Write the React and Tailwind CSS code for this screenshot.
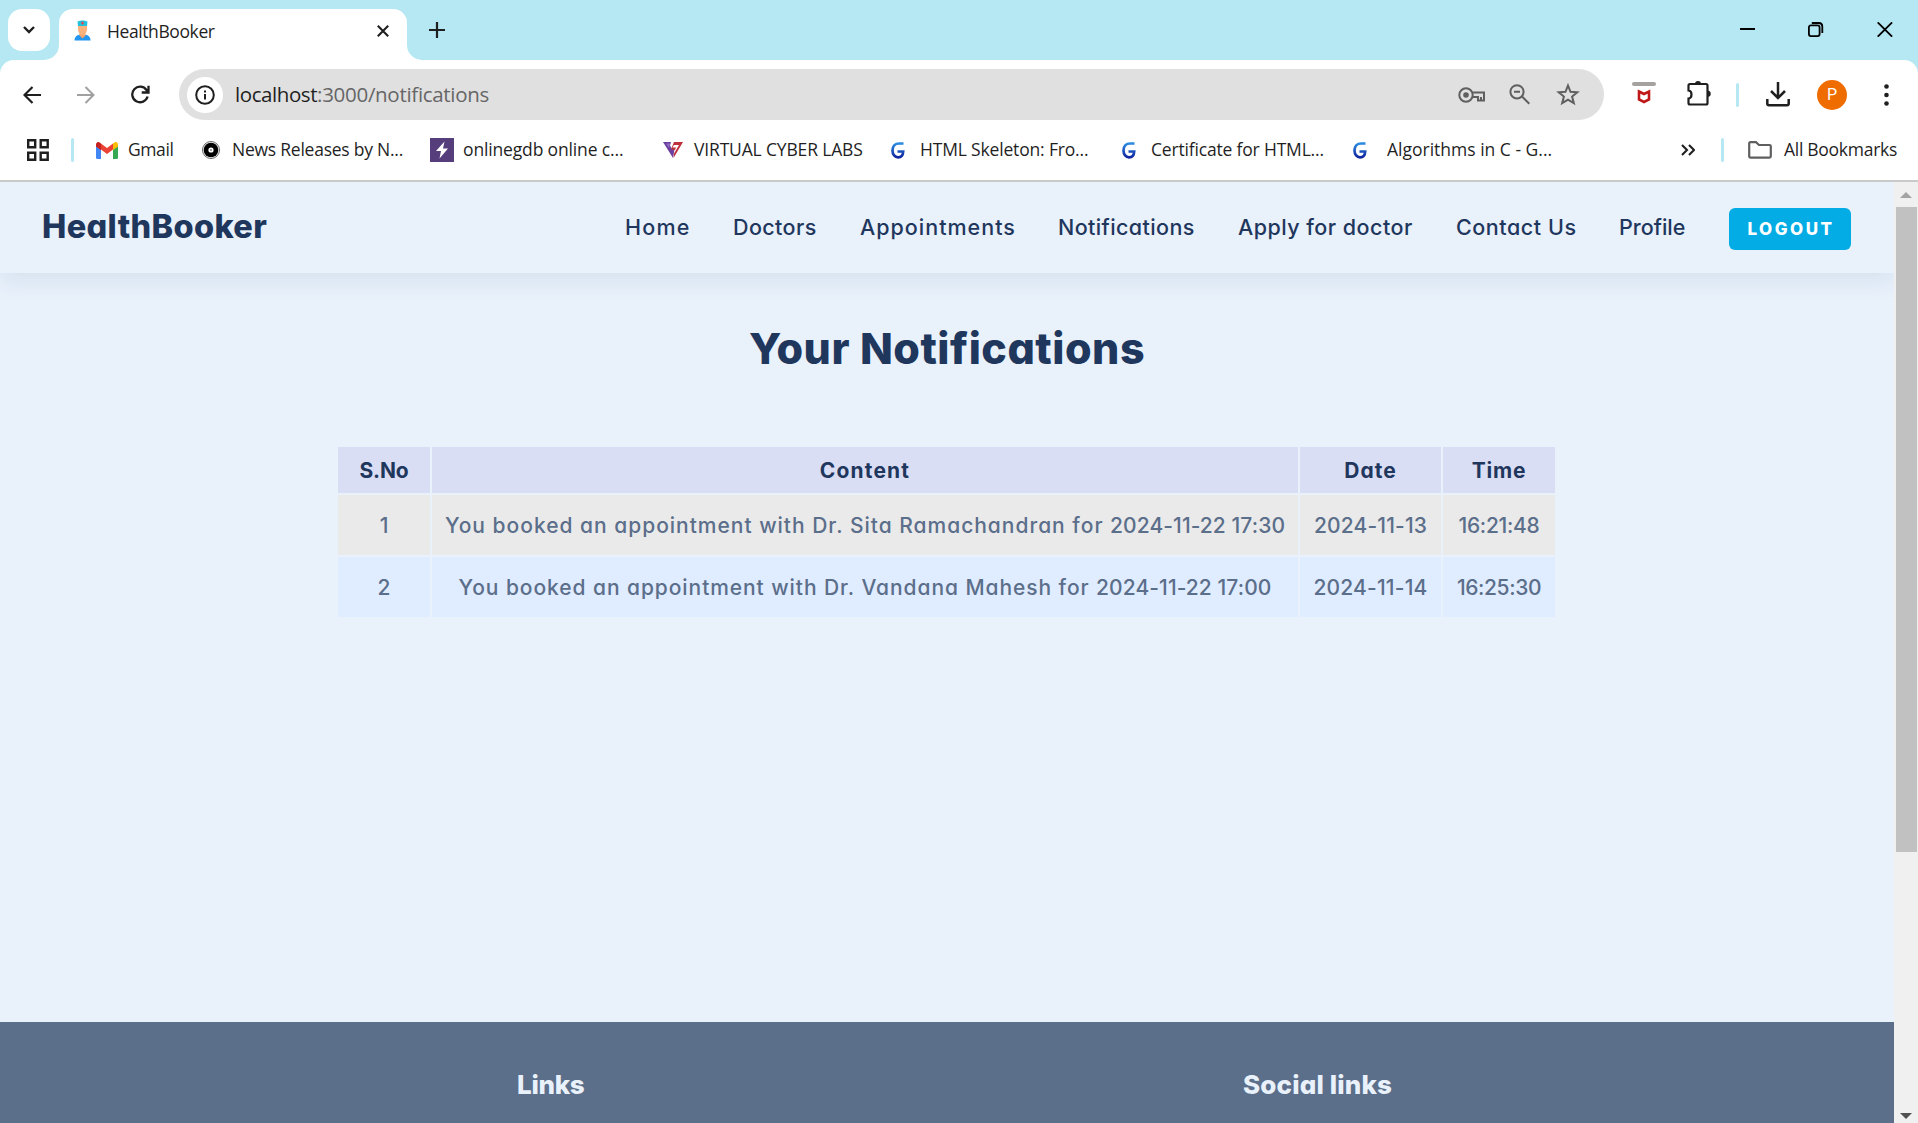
import React from "react";

function Doctor() {
  return (
    <svg width="17" height="21" viewBox="0 0 17 21">
      <path d="M0.5 20.5c0-4 2.500-5.500 6-6h4c3.500.5 6 2 6 6z" fill="#2196f3" />
      <path d="M5.500 13h6v2.500l-3 3-3-3z" fill="#f5a56b" />
      <path d="M4 5h9v4c0 3.500-2 6-4.500 6S4 12.500 4 9z" fill="#f9b27c" />
      <path d="M3.500 1.500C6 0 11 0 13.500 1.500L13 6H4z" fill="#22c1dc" />
      <path d="M8.500 1.500v3M7 3h3" stroke="#e5404a" strokeWidth="1.200" />
    </svg>
  );
}

function GmailIcon() {
  return (
    <svg width="22" height="17" viewBox="0 0 22 17">
      <path d="M0 3v12.500A1.500 1.500 0 0 0 1.500 17H5V6z" fill="#4285f4" />
      <path d="M22 3v12.500a1.500 1.500 0 0 1-1.500 1.500H17V6z" fill="#34a853" />
      <path d="M5 1.500v6l6 4.600 6-4.600v-6l-6 4.500z" fill="#ea4335" />
      <path d="M0 2.500v2L5 8.300V1.500L3.600.5C2-.5 0 .5 0 2.500z" fill="#c5221f" />
      <path d="M22 2.500v2l-5 3.800V1.500l1.400-1c1.600-1 3.600 0 3.600 2z" fill="#fbbc04" />
    </svg>
  );
}

function DotIcon() {
  return (
    <svg width="18" height="18" viewBox="0 0 18 18">
      <circle cx="9" cy="9" r="8.500" fill="#fff" stroke="#555" strokeWidth="0.900" />
      <circle cx="9" cy="9" r="7.300" fill="#000" />
      <circle cx="9" cy="9" r="2.600" fill="#fff" />
      <circle cx="9" cy="9" r="0.900" fill="#777" />
    </svg>
  );
}

function BoltIcon() {
  return (
    <svg width="24" height="24" viewBox="0 0 24 24">
      <path d="M0 0h24v24H0z" fill="#563d7c" />
      <path d="M14.500 3.500 6 13h5L9.500 20.500 18 10.500h-5z" fill="#fff" />
    </svg>
  );
}

function VclIcon() {
  return (
    <svg width="20" height="16" viewBox="0 0 20 16">
      <path d="M0 0h8L7 3.500 9 7h2.500L10 16z" fill="#6a3fa0" />
      <path d="M11 0h9L10.500 16 11 11.500 16 3h-5L9.500 5.500H13l-1 2.500-4-.5z" fill="#c0303a" />
      <path d="M3 1.500h4L6 6z" fill="#8d6cc0" />
    </svg>
  );
}

function GIcon() {
  return (
    <svg width="14" height="17" viewBox="0 0 14 17">
      <defs>
        <linearGradient id="g" x1="0" y1="0" x2="0" y2="1">
          <stop offset="0" stopColor="#2a8be0" />
          <stop offset="1" stopColor="#1226a0" />
        </linearGradient>
      </defs>
      <path d="M12.500 1.500H8C4 1.500 1.500 4.500 1.500 8.500S4 15.300 7 15.300s5-2 5.200-5.800H6.500" fill="none" stroke="url(#g)" strokeWidth="2.700" />
    </svg>
  );
}

const bookmarks = [
  { box: "w-[106px]", slot: "w-8", icon: <GmailIcon />, text: "Gmail", track: "tracking-[-0.4px]" },
  { box: "w-[228px]", slot: "w-[30px]", icon: <DotIcon />, text: "News Releases by N...", track: "tracking-[-0.24px]" },
  { box: "w-[233px]", slot: "w-[33px]", icon: <BoltIcon />, text: "onlinegdb online c...", track: "tracking-[-0.15px]" },
  { box: "w-[228px]", slot: "w-[31px]", icon: <VclIcon />, text: "VIRTUAL CYBER LABS", track: "tracking-[-0.16px]" },
  { box: "w-[231px]", slot: "w-[29px]", icon: <GIcon />, text: "HTML Skeleton: Fro...", track: "tracking-[-0.17px]" },
  { box: "w-[231px]", slot: "w-[29px]", icon: <GIcon />, text: "Certificate for HTML...", track: "tracking-[-0.18px]" },
  { box: "w-[328px]", slot: "w-[34px]", icon: <GIcon />, text: "Algorithms in C - G...", track: "tracking-normal" },
];

const nav = [
  { text: "Home", box: "w-[108px]", track: "tracking-[1.2px]" },
  { text: "Doctors", box: "w-[127px]", track: "tracking-[0.4px]" },
  { text: "Appointments", box: "w-[198px]", track: "tracking-[1px]" },
  { text: "Notifications", box: "w-[180px]", track: "tracking-[0.4px]" },
  { text: "Apply for doctor", box: "w-[218px]", track: "tracking-[0.47px]" },
  { text: "Contact Us", box: "w-[163px]", track: "tracking-[0.55px]" },
  { text: "Profile", box: "w-[110px]", track: "tracking-normal" },
];

const S = { fill: "none", stroke: "#1f1f1f", strokeWidth: 2 };

function Tabs() {
  return (
    <div className="flex h-[60px] bg-[#b5e8f3]">
      <div className="ml-2 mt-[9px] flex h-[42px] w-[42px] items-center justify-center rounded-[14px] bg-white">
        <svg width="14" height="10" viewBox="0 0 14 10"><path d="m2 2 5 5 5-5" {...S} strokeWidth="2.400" /></svg>
      </div>
      <div className="relative ml-[9px] mt-[9px] flex h-[51px] w-[348px] items-center rounded-t-[14px] bg-white pb-[8px] pl-[15px]">
        <svg className="absolute -left-[15px] bottom-0" width="15" height="15"><path d="M0 15A15 15 0 0 0 15 0V15z" fill="#fff" /></svg>
        <svg className="absolute -right-[15px] bottom-0" width="15" height="15"><path d="M15 15A15 15 0 0 1 0 0V15z" fill="#fff" /></svg>
        <Doctor />
        <span className="ml-4 mt-[2px] w-[270px] whitespace-nowrap text-[17.500px] tracking-[-0.4px] text-[#1f1f1f]">HealthBooker</span>
        <svg width="12" height="12" viewBox="0 0 12 12"><path d="m.8.8 10.400 10.400M11.200.8.8 11.200" {...S} strokeWidth="2.100" /></svg>
      </div>
      <svg className="ml-[22px] mt-[22px]" width="16" height="16" viewBox="0 0 16 16"><path d="M8 0v16M0 8h16" {...S} strokeWidth="2.200" /></svg>
      <div className="ml-auto mr-[25px] mt-[22px] flex gap-[53px]">
        <svg width="15" height="15" viewBox="0 0 15 15"><path d="M0 7h15" stroke="#000" strokeWidth="2" /></svg>
        <svg width="16" height="15" viewBox="0 0 16 15" fill="none" stroke="#000" strokeWidth="1.800">
          <rect x=".9" y="3.400" width="10.700" height="10.700" rx="2" />
          <path d="M3.800 1H11a3.500 3.500 0 0 1 3.300 3.500V11" />
        </svg>
        <svg width="16" height="15" viewBox="0 0 16 15"><path d="m.7.400 14.400 14.300M15.100.4.700 14.700" stroke="#000" strokeWidth="1.800" /></svg>
      </div>
    </div>
  );
}

function Toolbar() {
  return (
    <div className="bg-[#b5e8f3]">
      <div className="flex h-[69px] items-center rounded-t-[14px] bg-white pl-[23px]">
        <svg width="18" height="18" viewBox="0 0 18 18"><path d="M18 9H2M9.500 1 1.500 9l8 8" {...S} strokeWidth="2.200" /></svg>
        <svg className="ml-9" width="18" height="18" viewBox="0 0 18 18"><path d="M0 9h16M8.500 1l8 8-8 8" {...S} stroke="#a0a0a0" strokeWidth="2" /></svg>
        <svg className="ml-9" width="19" height="19" viewBox="0 0 19 19"><path d="M16.600 11.500A7.800 7.800 0 1 1 15.500 5L17 7.200M17.500.7v6.800h-6.800" {...S} strokeWidth="2.300" /></svg>
        <div className="ml-[29px] flex h-[51px] w-[1425px] items-center rounded-full bg-[#e0e0e0] pl-2">
          <div className="flex h-9 w-9 items-center justify-center rounded-full bg-white">
            <svg width="20" height="20" viewBox="0 0 20 20"><circle cx="10" cy="10" r="8.800" {...S} /><path d="M10 9v5.500M10 5.400v2" {...S} /></svg>
          </div>
          <div className="ml-3 flex w-[1223px] whitespace-nowrap text-[20.500px]">
            <span className="tracking-[-0.42px] text-[#1f1f1f]">localhost</span>
            <span className="tracking-[-0.3px] text-[#666]">:3000/notifications</span>
          </div>
          <svg width="28" height="18" viewBox="0 0 28 18" fill="none" stroke="#5f5f5f" strokeWidth="2"><circle cx="8" cy="9" r="6.700" /><circle cx="8" cy="9" r="2.800" fill="#5f5f5f" stroke="none" /><path d="M14.500 6.500H26V14.500h-6V11h-5.500M23 14.500V11" /></svg>
          <svg className="ml-[23px]" width="21" height="21" viewBox="0 0 21 21" fill="none" stroke="#5f5f5f" strokeWidth="2"><circle cx="8" cy="7.800" r="6.600" /><path d="M13 12.500l7.300 7.300M5 7.800h6" /></svg>
          <svg className="ml-[26px]" width="24" height="23" viewBox="0 0 24 23"><path d="m12 2.500 2.500 6.300 6.800.5-5.200 4.300 1.700 6.600-5.800-3.600-5.800 3.600 1.700-6.600-5.200-4.300 6.800-.5z" fill="none" stroke="#5f5f5f" strokeWidth="2" /></svg>
        </div>
        <svg className="-mt-1 ml-7" width="24" height="22" viewBox="0 0 24 22"><path d="M2 2h20" stroke="#a5a1a1" strokeWidth="4" strokeLinecap="round" /><path d="M7 9.500 12 12l5-2.500v8l-5 2.500-5-2.500z" fill="none" stroke="#c01818" strokeWidth="2.600" /></svg>
        <svg className="-mt-1 ml-[31px]" width="25" height="26" viewBox="0 0 25 26"><path d="M1.500 5.500c0-1 .5-1.500 1.500-1.500h16c1 0 1.500.5 1.500 1.500V23c0 1-.5 1.500-1.500 1.500H3c-1 0-1.500-.5-1.500-1.500v-4.500c4-.5 4-7.500 0-8z" {...S} strokeWidth="2.200" /><path d="M8 4a3 3 0 0 1 6 0zM21 10.500a3.300 3.300 0 0 1 0 6.500z" fill="#1f1f1f" /></svg>
        <div className="ml-6 h-6 w-[3px] rounded bg-[#b5e8f3]" />
        <svg className="ml-[27px]" width="24" height="25" viewBox="0 0 24 25"><path d="M12 0v15M5 9l7 7 7-7M1.300 17v4.500c0 1 .5 1.700 1.700 1.700h18c1.200 0 1.700-.7 1.700-1.700V17" {...S} strokeWidth="2.500" /></svg>
        <div className="ml-[27px] flex h-[30px] w-[30px] items-center justify-center rounded-full bg-[#ef6c00] font-[Roboto,sans-serif] text-[16px] text-white">P</div>
        <svg className="ml-[37px]" width="5" height="22" viewBox="0 0 5 22" fill="#1f1f1f"><circle cx="2.500" cy="2.500" r="2.300" /><circle cx="2.500" cy="11" r="2.300" /><circle cx="2.500" cy="19.500" r="2.300" /></svg>
      </div>
    </div>
  );
}

function Bookmarks() {
  return (
    <div className="flex h-[53px] items-center border-b-2 border-[#c9cbcb] bg-white pb-[9px] pl-[27px] text-[17.500px] text-[#1f1f1f]">
      <svg width="22" height="22" viewBox="0 0 22 22" {...S} strokeWidth="2.400"><path d="M1.200 1.200h7v7h-7zM13.700 1.200h7v7h-7zM1.200 13.700h7v7h-7zM13.700 13.700h7v7h-7z" /></svg>
      <div className="ml-[22px] mr-[22px] h-6 w-[3px] rounded bg-[#b5e8f3]" />
      {bookmarks.map((b) => (
        <div key={b.text} className={"flex shrink-0 items-center " + b.box}>
          <div className={"shrink-0 " + b.slot}>{b.icon}</div>
          <span className={"-mt-px whitespace-nowrap " + b.track}>{b.text}</span>
        </div>
      ))}
      <svg width="14" height="12" viewBox="0 0 14 12"><path d="m1 1 5 5-5 5M8 1l5 5-5 5" {...S} strokeWidth="2.100" /></svg>
      <div className="ml-[26px] h-6 w-[3px] rounded bg-[#b5e8f3]" />
      <svg className="ml-6" width="24" height="18" viewBox="0 0 24 18"><path d="M1.200 2.500c0-.9.400-1.300 1.300-1.300H8l3 2.800h10.500c.9 0 1.300.4 1.300 1.300v10c0 .9-.4 1.300-1.300 1.300h-19c-.9 0-1.300-.4-1.300-1.300z" fill="none" stroke="#5f5f5f" strokeWidth="2.200" /></svg>
      <span className="-mt-px ml-3 whitespace-nowrap tracking-[-0.28px]">All Bookmarks</span>
    </div>
  );
}

const headers = [
  { text: "S.No", track: "tracking-[-0.1px]" },
  { text: "Content", track: "tracking-[1.15px]" },
  { text: "Date", track: "tracking-[1px]" },
  { text: "Time", track: "tracking-[0.8px]" },
];

const rows = [
  {
    color: "bg-[#eaeaea]",
    cells: [
      { text: "1", track: "" },
      { text: "You booked an appointment with Dr. Sita Ramachandran for ", track: "tracking-[0.99px]", when: "2024-11-22 17:30" },
      { text: "2024-11-13", track: "tracking-[0.15px]" },
      { text: "16:21:48", track: "tracking-[-0.3px]" },
    ],
  },
  {
    color: "bg-[#e0ecff]",
    cells: [
      { text: "2", track: "" },
      { text: "You booked an appointment with Dr. Vandana Mahesh for ", track: "tracking-[0.93px]", when: "2024-11-22 17:00" },
      { text: "2024-11-14", track: "tracking-[0.18px]" },
      { text: "16:25:30", track: "tracking-[-0.4px]" },
    ],
  },
];

function Page() {
  return (
    <div className="flex h-[941px] font-[Inter,sans-serif] [font-feature-settings:'cv11']">
      <div className="flex w-[1894px] flex-col overflow-hidden bg-[#e9f1fb] text-[#1f375d]">
        <header className="flex h-[91px] shrink-0 items-center pl-[42px] shadow-[0_10px_20px_rgba(30,80,120,0.08)]">
          <span className="w-[583px] whitespace-nowrap text-[32.500px] font-extrabold tracking-[0.35px]">HealthBooker</span>
          {nav.map((n) => (
            <div key={n.text} className={"shrink-0 whitespace-nowrap text-[21.500px] font-medium " + n.box + " " + n.track}>{n.text}</div>
          ))}
          <button className="mt-[3px] flex h-[42px] w-[122px] shrink-0 items-center justify-center rounded-md bg-[#03ace4] pl-[2px] pt-px text-[17px] font-extrabold tracking-[2.5px] text-white">LOGOUT</button>
        </header>
        <h1 className="mt-[48px] text-center text-[43px] font-extrabold leading-[54px] tracking-[0.5px]">Your Notifications</h1>
        <div className="ml-[338px] mt-[72px] grid w-[1217px] grid-cols-[92px_866px_141px_112px] gap-x-0.5 gap-y-0.5 text-[21px]">
          {headers.map((h) => (
            <div key={h.text} className={"flex h-[46px] items-center justify-center bg-[#dadef4] pt-0.5 font-bold " + h.track}>{h.text}</div>
          ))}
          {rows.map((r) =>
            r.cells.map((c) => (
              <div key={c.text} className={"flex h-[60px] items-center justify-center whitespace-pre pt-0.5 font-medium text-[#5b6e8a] " + r.color}>
                <p className={c.track}>{c.text}{c.when && <span className="tracking-[0.08px]">{c.when}</span>}</p>
              </div>
            ))
          )}
        </div>
        <footer className="mt-auto flex h-[101px] bg-[#5b6e8a] pt-[43px] text-[26px] font-extrabold text-[#e9f1fb]">
          <span className="ml-[517px] w-[726px] tracking-[-0.3px]">Links</span>
          <span className="tracking-[0.15px]">Social links</span>
        </footer>
      </div>
      <div className="flex w-6 flex-col items-center justify-between bg-[#f0f0f0] pb-1 pt-[10px]">
        <svg width="12" height="6"><path d="M0 6 6 0l6 6z" fill="#a3a3a3" /></svg>
        <div className="mb-auto mt-[9px] h-[645px] w-[21px] bg-[#c1c1c1]" />
        <svg width="12" height="6"><path d="M0 0h12L6 6z" fill="#505050" /></svg>
      </div>
    </div>
  );
}

export default function App() {
  return (
    <div className="h-[1123px] w-[1918px] overflow-hidden font-['Open_Sans','Noto_Sans',sans-serif]">
      <Tabs />
      <Toolbar />
      <Bookmarks />
      <Page />
    </div>
  );
}
